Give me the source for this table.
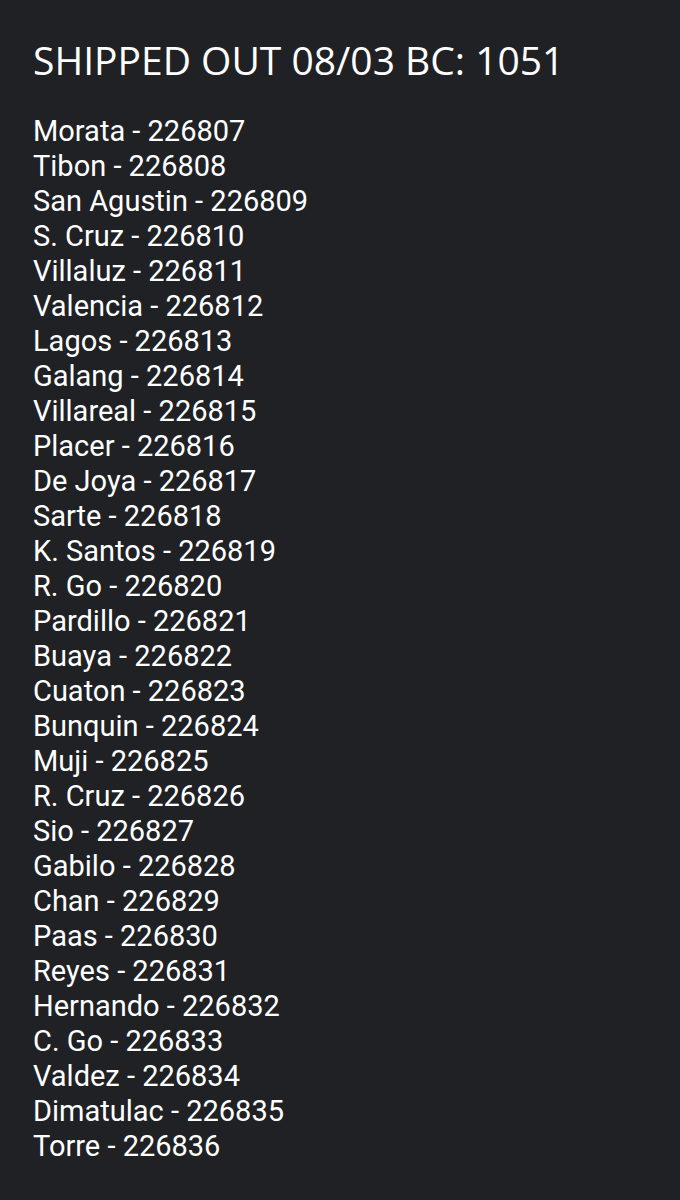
import React from 'react';

const entries = [
  'Morata', 'Tibon', 'San Agustin', 'S. Cruz', 'Villaluz', 'Valencia', 'Lagos', 'Galang',
  'Villareal', 'Placer', 'De Joya', 'Sarte', 'K. Santos', 'R. Go', 'Pardillo', 'Buaya',
  'Cuaton', 'Bunquin', 'Muji', 'R. Cruz', 'Sio', 'Gabilo', 'Chan', 'Paas', 'Reyes',
  'Hernando', 'C. Go', 'Valdez', 'Dimatulac', 'Torre',
];

export default function App() {
  return (
    <div className="min-h-[1200px] w-full bg-[#202124] px-[33px] pt-[36px] text-white">
      <h1 className="font-['Open_Sans',sans-serif] text-[39px] leading-[48px]">
        SHIPPED OUT 08/03 BC: 1051
      </h1>
      <ul className="mt-[30px] font-['Roboto',sans-serif] text-[29px] leading-[35px]">
        {entries.map((name, i) => (
          <li key={name}>{name} - {226807 + i}</li>
        ))}
      </ul>
    </div>
  );
}
